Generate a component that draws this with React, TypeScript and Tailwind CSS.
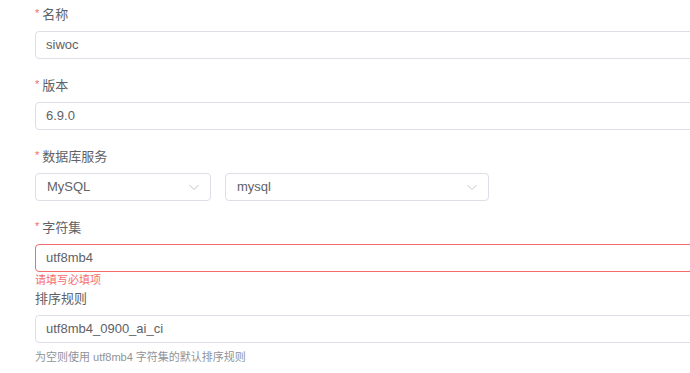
const FONT = {
  fontFamily:
    '"Liberation Sans", "Noto Sans CJK SC", Arial, sans-serif',
};

function Label({ text, required }: { text: string; required?: boolean }) {
  return (
    <div className="h-[22px] leading-[22px] text-[13px] text-[#606266] mb-[5px] flex items-center">
      {required && (
        <span className="text-[#f56c6c] text-[11px] mr-[3px] leading-none -mt-[3px]">*</span>
      )}
      <span>{text}</span>
    </div>
  );
}

function Input({ value, error }: { value: string; error?: boolean }) {
  return (
    <div
      className={`h-[28px] w-[700px] rounded-[4px] border bg-white flex items-center px-[10px] text-[13px] text-[#606266] ${
        error ? "border-[#f56c6c]" : "border-[#dcdfe6]"
      }`}
    >
      {value}
    </div>
  );
}

function Select({ value, width }: { value: string; width: string }) {
  return (
    <div
      className={`h-[28px] ${width} rounded-[4px] border border-[#dcdfe6] bg-white flex items-center justify-between pl-[11px] pr-[10px] text-[13px] text-[#606266]`}
    >
      <span>{value}</span>
      <svg width="12" height="12" viewBox="0 0 12 12" fill="none">
        <path d="M1.5 4l4.5 4.5L10.5 4" stroke="#c0c4cc" strokeWidth="1" />
      </svg>
    </div>
  );
}

export default function App() {
  return (
    <div className="w-[690px] h-[373px] overflow-hidden bg-white" style={FONT}>
      <div className="pl-[35px] pt-[4px]">
        <div className="mb-[16px]">
          <Label text="名称" required />
          <Input value="siwoc" />
        </div>
        <div className="mb-[16px]">
          <Label text="版本" required />
          <Input value="6.9.0" />
        </div>
        <div className="mb-[16px]">
          <Label text="数据库服务" required />
          <div className="flex gap-[14px]">
            <Select value="MySQL" width="w-[176px]" />
            <Select value="mysql" width="w-[264px]" />
          </div>
        </div>
        <div>
          <Label text="字符集" required />
          <Input value="utf8mb4" error />
          <div className="h-[16px] leading-[16px] text-[11px] text-[#f56c6c]">
            请填写必填项
          </div>
        </div>
        <div>
          <Label text="排序规则" />
          <Input value="utf8mb4_0900_ai_ci" />
          <div className="mt-[6px] text-[11px] leading-[16px] text-[#909399]">
            为空则使用 utf8mb4 字符集的默认排序规则
          </div>
        </div>
      </div>
    </div>
  );
}
